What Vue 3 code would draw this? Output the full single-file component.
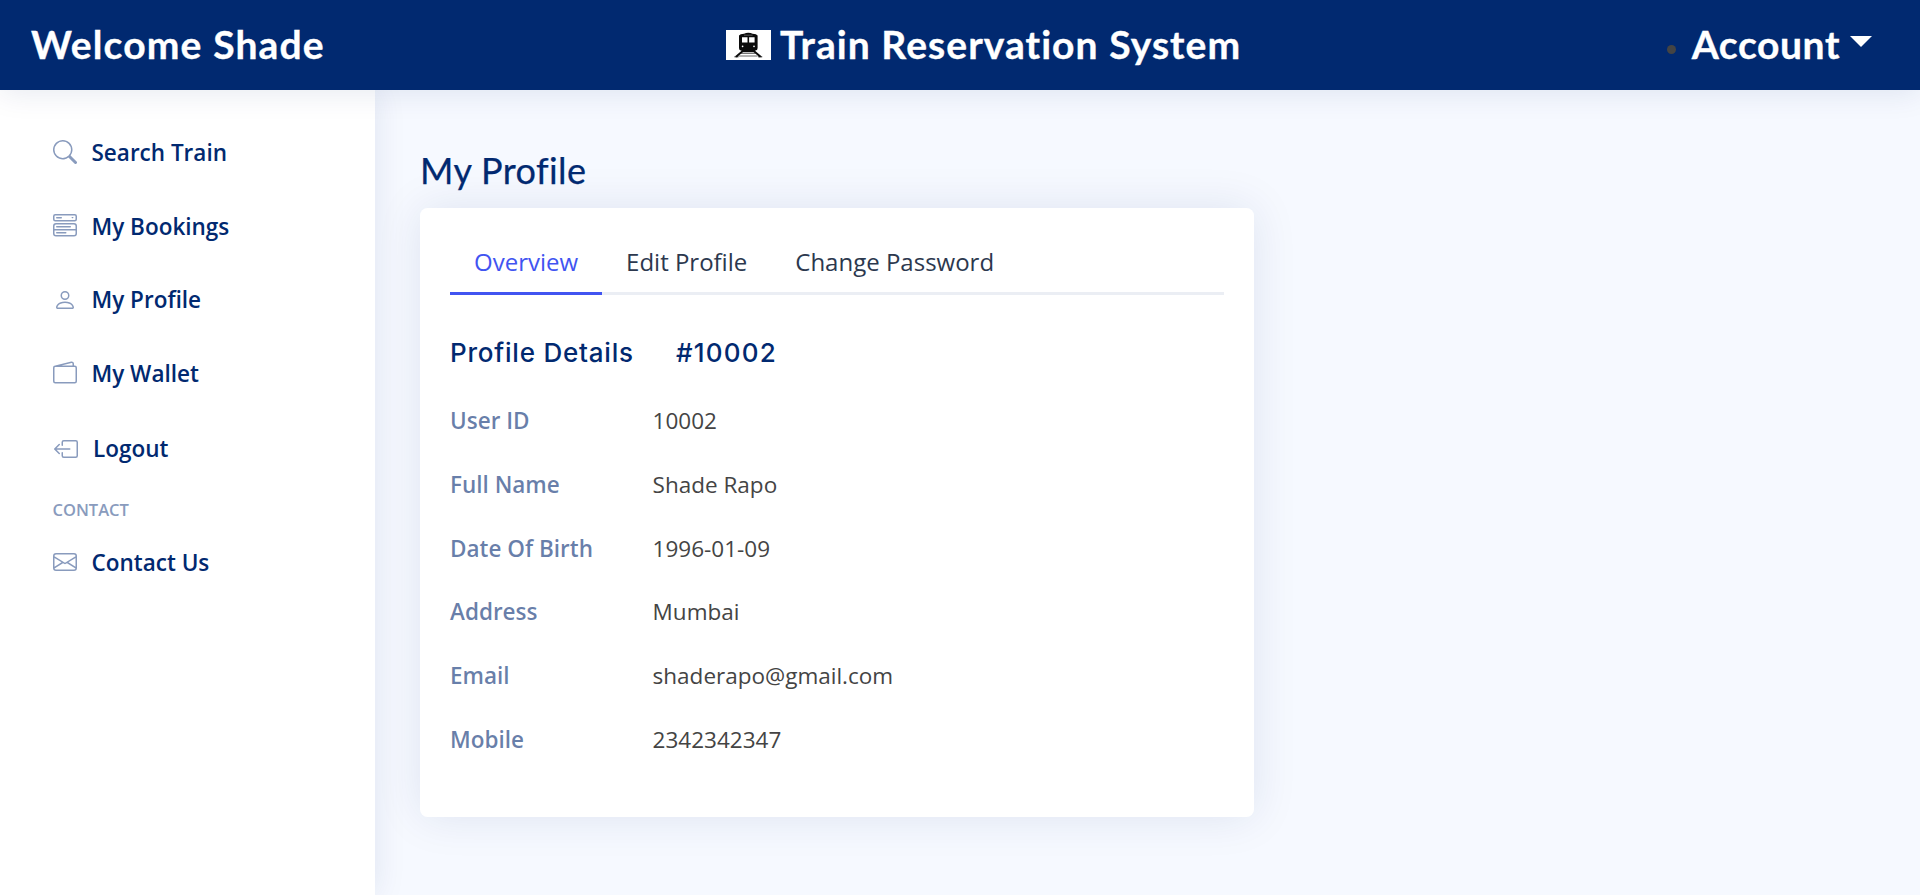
<script setup>
const menu = [
  { label: 'Search Train', icon: 'search' },
  { label: 'My Bookings', icon: 'bookings' },
  { label: 'My Profile', icon: 'person' },
  { label: 'My Wallet', icon: 'wallet' },
  { label: 'Logout', icon: 'logout' },
]

const icons = {
  search: ['M11.742 10.344a6.5 6.5 0 1 0-1.397 1.398h-.001c.03.04.062.078.098.115l3.85 3.85a1 1 0 0 0 1.415-1.414l-3.85-3.85a1.007 1.007 0 0 0-.115-.1zM12 6.5a5.5 5.5 0 1 1-11 0 5.5 5.5 0 0 1 11 0z'],
  bookings: [
    'M0 1.5A1.5 1.5 0 0 1 1.5 0h13A1.5 1.5 0 0 1 16 1.5v2A1.5 1.5 0 0 1 14.5 5h-13A1.5 1.5 0 0 1 0 3.5v-2zM1.5 1a.5.5 0 0 0-.5.5v2a.5.5 0 0 0 .5.5h13a.5.5 0 0 0 .5-.5v-2a.5.5 0 0 0-.5-.5h-13z',
    'M2 2.5a.5.5 0 0 1 .5-.5h3a.5.5 0 0 1 0 1h-3a.5.5 0 0 1-.5-.5zm10.823.323-.396-.396A.25.25 0 0 1 12.604 2h.792a.25.25 0 0 1 .177.427l-.396.396a.25.25 0 0 1-.354 0zM0 8a2 2 0 0 1 2-2h12a2 2 0 0 1 2 2v5a2 2 0 0 1-2 2H2a2 2 0 0 1-2-2V8zm1 3v2a1 1 0 0 0 1 1h12a1 1 0 0 0 1-1v-2H1zm14-1V8a1 1 0 0 0-1-1H2a1 1 0 0 0-1 1v2h14zM2 8.5a.5.5 0 0 1 .5-.5h9a.5.5 0 0 1 0 1h-9a.5.5 0 0 1-.5-.5zm0 4a.5.5 0 0 1 .5-.5h6a.5.5 0 0 1 0 1h-6a.5.5 0 0 1-.5-.5z',
  ],
  person: ['M8 8a3 3 0 1 0 0-6 3 3 0 0 0 0 6zm2-3a2 2 0 1 1-4 0 2 2 0 0 1 4 0zm4 8c0 1-1 1-1 1H3s-1 0-1-1 1-4 6-4 6 3 6 4zm-1-.004c-.001-.246-.154-.986-.832-1.664C11.516 10.68 10.289 10 8 10c-2.29 0-3.516.68-4.168 1.332-.678.678-.83 1.418-.832 1.664h10z'],
  wallet: ['M12.136.326A1.5 1.5 0 0 1 14 1.78V3h.5A1.5 1.5 0 0 1 16 4.5v9a1.5 1.5 0 0 1-1.5 1.5h-13A1.5 1.5 0 0 1 0 13.5v-9a1.5 1.5 0 0 1 1.432-1.499L12.136.326zM5.562 3H13V1.78a.5.5 0 0 0-.621-.484L5.562 3zM1.5 4a.5.5 0 0 0-.5.5v9a.5.5 0 0 0 .5.5h13a.5.5 0 0 0 .5-.5v-9a.5.5 0 0 0-.5-.5h-13z'],
  logout: [
    'M6 12.5a.5.5 0 0 0 .5.5h8a.5.5 0 0 0 .5-.5v-9a.5.5 0 0 0-.5-.5h-8a.5.5 0 0 0-.5.5v2a.5.5 0 0 1-1 0v-2A1.5 1.5 0 0 1 6.5 2h8A1.5 1.5 0 0 1 16 3.5v9a1.5 1.5 0 0 1-1.5 1.5h-8A1.5 1.5 0 0 1 5 12.5v-2a.5.5 0 0 1 1 0v2z',
    'M.146 8.354a.5.5 0 0 1 0-.708l3-3a.5.5 0 1 1 .708.708L1.707 7.5H10.5a.5.5 0 0 1 0 1H1.707l2.147 2.146a.5.5 0 0 1-.708.708l-3-3z',
  ],
  envelope: ['M0 4a2 2 0 0 1 2-2h12a2 2 0 0 1 2 2v8a2 2 0 0 1-2 2H2a2 2 0 0 1-2-2V4Zm2-1a1 1 0 0 0-1 1v.217l7 4.2 7-4.2V4a1 1 0 0 0-1-1H2Zm13 2.383-4.708 2.825L15 11.105V5.383Zm-.034 6.876-5.64-3.471L8 9.583l-1.326-.795-5.64 3.47A1 1 0 0 0 2 13h12a1 1 0 0 0 .966-.741ZM1 11.105l4.708-2.897L1 5.383v5.722Z'],
}

const tabs = ['Overview', 'Edit Profile', 'Change Password']

const details = [
  ['User ID', '10002'],
  ['Full Name', 'Shade Rapo'],
  ['Date Of Birth', '1996-01-09'],
  ['Address', 'Mumbai'],
  ['Email', 'shaderapo@gmail.com'],
  ['Mobile', '2342342347'],
]
</script>

<template>
  <div class="page">
    <header class="header">
      <span class="brand welcome">Welcome Shade</span>
      <div class="brand title">
        <svg class="train" viewBox="0 0 45 30" aria-hidden="true">
          <rect width="45" height="30" fill="#fff" />
          <path d="M13 5.5Q14 4 18 3.8Q20 2.8 22.3 2.8T26.6 3.8Q30.6 4 31.6 5.5V18Q31.6 20 29.8 20.5H14.8Q13 20 13 18Z" fill="#0b0b0b" />
          <path d="M16 7.2h5.5v5.2H16zM23.1 7.2h5.5v5.2h-5.5z" fill="#fff" />
          <path d="M18 5.2h8.6" stroke="#777" stroke-width=".7" />
          <circle cx="16.6" cy="16.3" r=".85" fill="#fff" />
          <circle cx="28" cy="16.3" r=".85" fill="#fff" />
          <path d="M15.5 20h13.6v2.2H15.5z" fill="#0b0b0b" />
          <path d="M15 23.4h14.6M13 26h18.6" stroke="#555" stroke-width=".9" />
          <path d="M16.5 21.2L10 26.7M28.1 21.2L34.6 26.7" stroke="#0b0b0b" stroke-width="1.9" />
          <path d="M8.5 26.8h4M32.2 26.8h4" stroke="#0b0b0b" stroke-width="1" />
        </svg>
        <span>Train Reservation System</span>
      </div>
      <div class="brand account">
        <i class="dot"></i>
        <span>Account</span>
        <i class="caret"></i>
      </div>
    </header>

    <div class="body">
      <aside class="sidebar">
        <nav class="menu">
          <a v-for="item in menu" :key="item.label" class="item" :class="item.icon">
            <svg class="icon" viewBox="0 0 16 16"><path v-for="d in icons[item.icon]" :key="d" :d="d" /></svg>
            <span>{{ item.label }}</span>
          </a>
        </nav>
        <div class="heading">CONTACT</div>
        <a class="item">
          <svg class="icon" viewBox="0 0 16 16"><path v-for="d in icons.envelope" :key="d" :d="d" /></svg>
          <span>Contact Us</span>
        </a>
      </aside>

      <main class="main">
        <h1 class="page-title">My Profile</h1>
        <section class="card">
          <div class="tabs">
            <button v-for="(tab, i) in tabs" :key="tab" class="tab" :class="{ active: i === 0 }">{{ tab }}</button>
          </div>
          <h2 class="card-title"><span class="name">Profile Details</span><span class="number">#10002</span></h2>
          <dl class="details">
            <div v-for="[label, value] in details" :key="label" class="row">
              <dt>{{ label }}</dt>
              <dd>{{ value }}</dd>
            </div>
          </dl>
        </section>
      </main>
    </div>
  </div>
</template>

<style>
body {
  background: #f6f9ff;
  overflow: hidden;
}
</style>

<style scoped>
.page {
  height: 895px;
  display: flex;
  flex-direction: column;
  font-family: "Open Sans", "Liberation Sans", sans-serif;
  color: #444;
  background: #f6f9ff;
  overflow: hidden;
}
.header {
  position: relative;
  z-index: 2;
  box-sizing: border-box;
  height: 90px;
  flex: none;
  display: flex;
  align-items: center;
  justify-content: space-between;
  padding: 0 48px 2px 31px;
  background: #012970;
  box-shadow: 0 3px 30px rgba(1, 41, 112, 0.1);
}
.brand {
  display: flex;
  align-items: center;
  font: 700 39px/46px Lato, sans-serif;
  color: #fff;
  white-space: nowrap;
  -webkit-text-stroke: 0.35px #fff;
}
.welcome {
  width: 695px;
  letter-spacing: 1.15px;
}
.title {
  flex: 1;
  letter-spacing: 1.07px;
}
.train {
  width: 45px;
  height: 30px;
  margin: 2px 9px 0 0;
}
.account {
  letter-spacing: 0.6px;
}
.dot {
  width: 9px;
  height: 9px;
  margin: 11px 15.5px 0 0;
  border-radius: 50%;
  background: #444;
}
.caret {
  margin: 0 0 5px 10px;
  border: 11.5px solid transparent;
  border-top-color: #fff;
  border-bottom: 0;
}
.body {
  flex: 1;
  display: flex;
}
.sidebar {
  position: relative;
  z-index: 1;
  box-sizing: border-box;
  width: 375px;
  flex: none;
  padding: 44.4px 30px 0 52.5px;
  background: #fff;
  box-shadow: 0 0 30px rgba(1, 41, 112, 0.1);
}
.menu {
  display: flex;
  flex-direction: column;
  gap: 37.7px;
}
.item {
  display: flex;
  align-items: center;
  gap: 15px;
  height: 36px;
  font-size: 22.5px;
  font-weight: 600;
  color: #012970;
}
.item.logout {
  margin: 1.5px 0 0 1.5px;
}
.icon {
  width: 24px;
  height: 24px;
  fill: #899bbd;
}
.heading {
  height: 24px;
  margin: 31.5px 0 22px;
  font-size: 16.5px;
  line-height: 24px;
  font-weight: 600;
  color: #899bbd;
}
.main {
  padding: 58px 0 0 45px;
}
.page-title {
  margin: 0 0 16px;
  height: 44px;
  font: 400 36px/44px Lato, sans-serif;
  letter-spacing: 0.4px;
  color: #012970;
  -webkit-text-stroke: 0.25px #012970;
}
.card {
  box-sizing: border-box;
  width: 834px;
  height: 609px;
  padding: 30px;
  border-radius: 7.5px;
  background: #fff;
  box-shadow: 0 0 45px rgba(1, 41, 112, 0.1);
}
.tabs {
  box-sizing: border-box;
  height: 57px;
  display: flex;
  border-bottom: 3px solid #ebeef4;
}
.tab {
  box-sizing: border-box;
  height: 57px;
  padding: 0 24px 7px;
  border: 0;
  border-bottom: 3px solid transparent;
  background: none;
  font: 400 24px/36px "Open Sans", sans-serif;
  color: #2c384e;
}
.tab.active {
  color: #4154f1;
  border-bottom-color: #4154f1;
}
.card-title {
  display: flex;
  margin: 40px 0 0;
  font: 500 26px/36px Inter, sans-serif;
  color: #012970;
}
.name {
  width: 226px;
  letter-spacing: 0.78px;
}
.number {
  letter-spacing: 1.2px;
}
.details {
  display: flex;
  flex-direction: column;
  gap: 30px;
  margin: 33px 0 0;
  font-size: 22.5px;
  line-height: 33.8px;
}
.row {
  display: flex;
}
dt {
  width: 202.6px;
  font-weight: 600;
  color: rgba(1, 41, 112, 0.6);
}
dd {
  margin: 0;
}
</style>
